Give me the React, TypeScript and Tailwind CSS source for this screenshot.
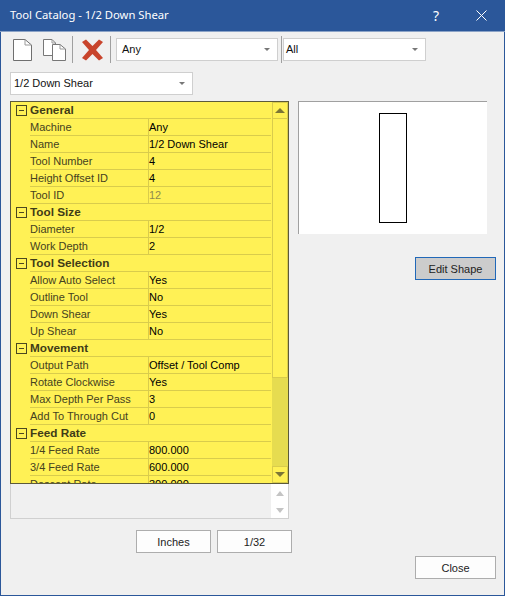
import React from 'react';

type Row = { label: string; value?: string; dim?: boolean };

const rows: Row[] = [
  { label: 'General' },
  { label: 'Machine', value: 'Any' },
  { label: 'Name', value: '1/2 Down Shear' },
  { label: 'Tool Number', value: '4' },
  { label: 'Height Offset ID', value: '4' },
  { label: 'Tool ID', value: '12', dim: true },
  { label: 'Tool Size' },
  { label: 'Diameter', value: '1/2' },
  { label: 'Work Depth', value: '2' },
  { label: 'Tool Selection' },
  { label: 'Allow Auto Select', value: 'Yes' },
  { label: 'Outline Tool', value: 'No' },
  { label: 'Down Shear', value: 'Yes' },
  { label: 'Up Shear', value: 'No' },
  { label: 'Movement' },
  { label: 'Output Path', value: 'Offset / Tool Comp' },
  { label: 'Rotate Clockwise', value: 'Yes' },
  { label: 'Max Depth Per Pass', value: '3' },
  { label: 'Add To Through Cut', value: '0' },
  { label: 'Feed Rate' },
  { label: '1/4 Feed Rate', value: '800.000' },
  { label: '3/4 Feed Rate', value: '600.000' },
  { label: 'Descent Rate', value: '300.000' },
];

function Combo({ text, className }: { text: string; className: string }) {
  return (
    <div className={`flex h-[23px] items-center justify-between border border-[#cfcfcf] bg-white pl-[5px] pr-[7px] text-[11px] text-[#111] ${className}`}>
      <span>{text}</span>
      <span className="h-0 w-0 border-x-[3px] border-t-[3px] border-x-transparent border-t-[#777]" />
    </div>
  );
}

function Button({ text, className }: { text: string; className: string }) {
  return (
    <div className={`flex h-[23px] items-center justify-center border border-[#adadad] bg-[#fdfdfd] pt-px text-[11px] text-[#222] ${className}`}>
      {text}
    </div>
  );
}

function PageIcon() {
  return (
    <svg width="19" height="22" viewBox="0 0 19 22" fill="none">
      <path d="M0.5 0.5H12L18.5 6V21.5H0.5Z" fill="#fff" stroke="#6f6f6f" />
      <path d="M12 0.5V6H18.5" stroke="#9a9a9a" />
    </svg>
  );
}

function CopyIcon() {
  return (
    <svg width="23" height="22" viewBox="0 0 23 22" fill="none">
      <path d="M0.5 0.5H9L12.5 4V16.5H0.5Z" fill="#fff" stroke="#777" />
      <path d="M9 0.5V4H12.5" stroke="#999" />
      <path d="M9.5 5.5H17L22.5 10V21.5H9.5Z" fill="#fff" stroke="#777" />
      <path d="M17 5.5V10H22.5" stroke="#999" />
    </svg>
  );
}

function DeleteIcon() {
  return (
    <svg width="23" height="22" viewBox="0 0 23 22">
      <path d="M1 3L5 0.5L11.5 7L18 0.5L22 3L15 11L22 19L18 21.5L11.5 15L5 21.5L1 19L8 11Z" fill="#c8442c" />
    </svg>
  );
}

function Grid() {
  return (
    <div className="relative h-[383px] overflow-hidden border border-[#5c5a3a] bg-[#fff155] text-[11px] leading-[17px]">
      <div className="mr-[17px]">
        {rows.map((row) =>
          row.value === undefined ? (
            <div key={row.label} className="flex h-[17px] items-center">
              <div className="flex w-[19px] justify-center pl-[1px]">
                <div className="flex h-[11px] w-[11px] items-center justify-center border border-[#4b4820]">
                  <div className="h-px w-[5px] bg-[#4b4820]" />
                </div>
              </div>
              <div className="flex h-[17px] flex-1 items-center border-b border-[#d9cc4c] pb-[2px] text-[11.75px] font-bold text-[#3f3c18]">{row.label}</div>
            </div>
          ) : (
            <div key={row.label} className="flex h-[17px]">
              <div className="w-[19px]" />
              <div className="flex w-[119px] items-center border-b border-r border-[#d9cc4c] text-[#45421f]">{row.label}</div>
              <div className={`flex flex-1 items-center border-b border-[#d9cc4c] ${row.dim ? 'text-[#8f8c4e]' : 'text-black'}`}>{row.value}</div>
            </div>
          ),
        )}
      </div>
      {/* scrollbar floats over the yellow sheet */}
      <div className="absolute bottom-0 right-0 top-0 flex w-[16px] flex-col bg-[#e6dc50]">
        <div className="flex h-[17px] items-center justify-center border border-[#d9cc4c] bg-[#fff155]">
          <span className="h-0 w-0 border-x-[5px] border-b-[5px] border-x-transparent border-b-[#7c7636]" />
        </div>
        <div className="h-[259px] border-x border-b border-[#d9cc4c] bg-[#fff155]" />
        <div className="flex-1" />
        <div className="flex h-[17px] items-center justify-center border border-[#d9cc4c] bg-[#fff155]">
          <span className="h-0 w-0 border-x-[5px] border-t-[5px] border-x-transparent border-t-[#7c7636]" />
        </div>
      </div>
    </div>
  );
}

export default function App() {
  return (
    <div className="flex h-[596px] w-[505px] flex-col border-x border-b border-[#2b579a] bg-[#f0f0f0] font-['Liberation_Sans',sans-serif]">
      <div className="-mx-px flex h-[32px] shrink-0 items-center justify-between border-b border-[#8ba3c7] bg-[#2b579a] pl-[10px] font-['Noto_Sans',sans-serif] text-[11.25px] text-white">
        <span>Tool Catalog - 1/2 Down Shear</span>
        <div className="flex items-center">
          <span className="mr-[37px] text-[14px]">?</span>
          <svg className="mr-[18px]" width="11" height="11" viewBox="0 0 11 11" stroke="#fff" strokeWidth="1">
            <path d="M0.5 0.5L10.5 10.5M10.5 0.5L0.5 10.5" />
          </svg>
        </div>
      </div>

      <div className="mt-[5px] flex h-[25px] items-center pl-[12px]">
        <PageIcon />
        <div className="ml-[11px]"><CopyIcon /></div>
        <div className="ml-[6px] h-[27px] w-px bg-[#a0a0a0]" />
        <div className="ml-[8px]"><DeleteIcon /></div>
        <div className="ml-[6px] h-[27px] w-px bg-[#a0a0a0]" />
        <Combo text="Any" className="ml-[5px] w-[162px]" />
        <div className="ml-[3px] h-[27px] w-px bg-[#a0a0a0]" />
        <Combo text="All" className="ml-px w-[143px] !pl-[2px]" />
      </div>

      <Combo text="1/2 Down Shear" className="ml-[9px] mt-[10px] w-[183px] !pl-[3px]" />

      <div className="mt-[6px] flex pl-[9px]">
        <div className="w-[279px]">
          <Grid />
          <div className="flex h-[35px] justify-end border-b border-l border-r border-[#d0d0d0]">
            <div className="flex w-[17px] flex-col items-center gap-[12px] bg-white pt-[7px]">
              <span className="h-0 w-0 border-x-[4px] border-b-[5px] border-x-transparent border-b-[#c4c4c4]" />
              <span className="h-0 w-0 border-x-[4px] border-t-[5px] border-x-transparent border-t-[#c4c4c4]" />
            </div>
          </div>
          <div className="mt-[11px] flex justify-end gap-[6px]">
            <Button text="Inches" className="w-[75px]" />
            <Button text="1/32" className="-mr-[3px] w-[75px]" />
          </div>
        </div>
        <div className="ml-[9px] w-[198px]">
          <div className="flex h-[133px] w-[189px] justify-center border-l border-t border-[#a0a0a0] bg-white pt-[11px]">
            <div className="h-[110px] w-[28px] border border-black" />
          </div>
          <div className="mt-[23px] flex justify-end">
            <Button text="Edit Shape" className="w-[81px] !border-[#2168b8] !bg-[#cccccc]" />
          </div>
        </div>
      </div>

      <div className="mt-[3px] flex justify-end pr-[8px]">
        <Button text="Close" className="w-[81px]" />
      </div>
    </div>
  );
}
